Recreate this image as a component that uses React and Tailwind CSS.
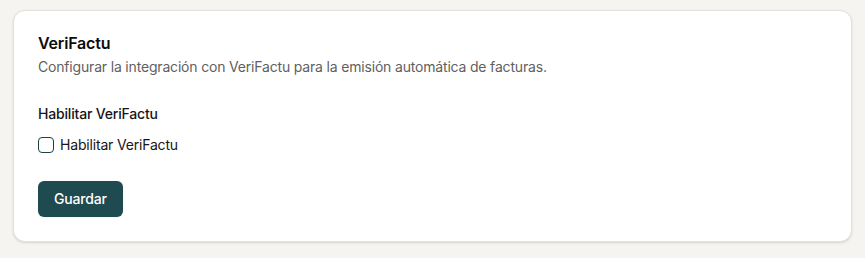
export default function App() {
  return (
    <div
      className="h-[258px] bg-[#f5f4f0] px-[13px] pt-[10px] tracking-[-0.18px]"
      style={{ fontFamily: "Inter, 'Noto Sans', sans-serif" }}
    >
      <section className="rounded-xl border border-[#e3e1db] bg-white p-6 shadow-sm">
        <h3 className="text-base font-semibold leading-none text-[#0b0b0b]">VeriFactu</h3>
        <p className="mt-1.5 text-sm leading-5 text-[#5f5f5f]">
          Configurar la integración con VeriFactu para la emisión automática de facturas.
        </p>

        <div className="mt-[27px]">
          <p className="text-sm font-medium leading-5 text-[#161616]">Habilitar VeriFactu</p>
          <label className="mt-[11px] flex h-5 items-center gap-1.5">
            <span className="h-4 w-4 rounded-[4px] border-[1.5px] border-[#1f3f44] bg-white" />
            <span className="text-sm leading-5 text-[#161616]">Habilitar VeriFactu</span>
          </label>
        </div>

        <button
          type="button"
          className="mt-[26px] h-9 rounded-md bg-[#1f4a4f] px-4 text-sm font-medium text-white shadow-xs"
        >
          Guardar
        </button>
      </section>
    </div>
  );
}
